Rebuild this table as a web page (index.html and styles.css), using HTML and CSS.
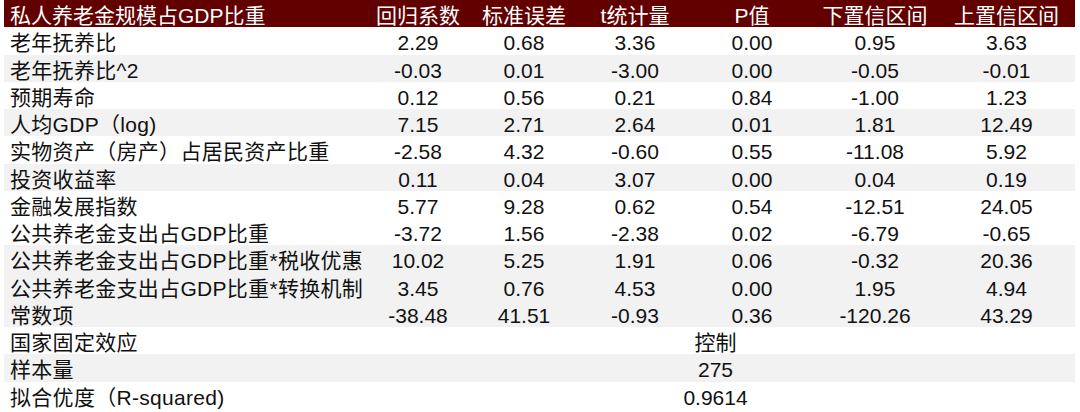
FILE: index.html
```html
<!DOCTYPE html>
<html lang="zh-CN">
<head>
<meta charset="utf-8">
<title>私人养老金规模占GDP比重</title>
<link rel="stylesheet" href="styles.css">
</head>
<body>
<div class="table">
  <div class="row head">
    <div class="label">私人养老金规模占GDP比重</div>
    <div class="cell">回归系数</div>
    <div class="cell">标准误差</div>
    <div class="cell">t统计量</div>
    <div class="cell">P值</div>
    <div class="cell">下置信区间</div>
    <div class="cell">上置信区间</div>
  </div>
  <div class="row">
    <div class="label">老年抚养比</div>
    <div class="cell">2.29</div><div class="cell">0.68</div><div class="cell">3.36</div><div class="cell">0.00</div><div class="cell">0.95</div><div class="cell">3.63</div>
  </div>
  <div class="row alt">
    <div class="label">老年抚养比^2</div>
    <div class="cell">-0.03</div><div class="cell">0.01</div><div class="cell">-3.00</div><div class="cell">0.00</div><div class="cell">-0.05</div><div class="cell">-0.01</div>
  </div>
  <div class="row">
    <div class="label">预期寿命</div>
    <div class="cell">0.12</div><div class="cell">0.56</div><div class="cell">0.21</div><div class="cell">0.84</div><div class="cell">-1.00</div><div class="cell">1.23</div>
  </div>
  <div class="row alt">
    <div class="label">人均GDP（log)</div>
    <div class="cell">7.15</div><div class="cell">2.71</div><div class="cell">2.64</div><div class="cell">0.01</div><div class="cell">1.81</div><div class="cell">12.49</div>
  </div>
  <div class="row">
    <div class="label">实物资产（房产）占居民资产比重</div>
    <div class="cell">-2.58</div><div class="cell">4.32</div><div class="cell">-0.60</div><div class="cell">0.55</div><div class="cell">-11.08</div><div class="cell">5.92</div>
  </div>
  <div class="row alt">
    <div class="label">投资收益率</div>
    <div class="cell">0.11</div><div class="cell">0.04</div><div class="cell">3.07</div><div class="cell">0.00</div><div class="cell">0.04</div><div class="cell">0.19</div>
  </div>
  <div class="row">
    <div class="label">金融发展指数</div>
    <div class="cell">5.77</div><div class="cell">9.28</div><div class="cell">0.62</div><div class="cell">0.54</div><div class="cell">-12.51</div><div class="cell">24.05</div>
  </div>
  <div class="row">
    <div class="label">公共养老金支出占GDP比重</div>
    <div class="cell">-3.72</div><div class="cell">1.56</div><div class="cell">-2.38</div><div class="cell">0.02</div><div class="cell">-6.79</div><div class="cell">-0.65</div>
  </div>
  <div class="row alt">
    <div class="label">公共养老金支出占GDP比重*税收优惠</div>
    <div class="cell">10.02</div><div class="cell">5.25</div><div class="cell">1.91</div><div class="cell">0.06</div><div class="cell">-0.32</div><div class="cell">20.36</div>
  </div>
  <div class="row alt">
    <div class="label">公共养老金支出占GDP比重*转换机制</div>
    <div class="cell">3.45</div><div class="cell">0.76</div><div class="cell">4.53</div><div class="cell">0.00</div><div class="cell">1.95</div><div class="cell">4.94</div>
  </div>
  <div class="row alt">
    <div class="label">常数项</div>
    <div class="cell">-38.48</div><div class="cell">41.51</div><div class="cell">-0.93</div><div class="cell">0.36</div><div class="cell">-120.26</div><div class="cell">43.29</div>
  </div>
  <div class="row">
    <div class="label">国家固定效应</div>
    <div class="cell span">控制</div>
  </div>
  <div class="row alt">
    <div class="label">样本量</div>
    <div class="cell span">275</div>
  </div>
  <div class="row">
    <div class="label">拟合优度（R-squared)</div>
    <div class="cell span">0.9614</div>
  </div>
</div>
</body>
</html>
```

FILE: styles.css
```css
html, body {
  margin: 0;
  padding: 0;
  background: #ffffff;
}

body {
  font-family: "Liberation Sans", "Noto Sans CJK SC", Arial, sans-serif;
  font-size: 21px;
  color: #111111;
}

.table {
  width: 1071px;
  margin-left: 4px;
  display: flex;
  flex-direction: column;
}

.row {
  display: grid;
  grid-template-columns: 362px 104px 108px 114px 120px 126px 137px;
  height: 27.25px;
  line-height: 27.25px;
  background: #ffffff;
}

.row.alt {
  background: #f2f2f2;
}

.row.head {
  background: #620000;
  color: #ffffff;
}

.label {
  padding-left: 6px;
  white-space: nowrap;
  letter-spacing: 0.3px;
  position: relative;
  top: 2px;
}

.row.head .label {
  letter-spacing: 0;
}

.cell {
  text-align: center;
  white-space: nowrap;
  position: relative;
  top: 2px;
}

.cell.span {
  grid-column: 2 / -1;
  padding-right: 10px;
}
```
